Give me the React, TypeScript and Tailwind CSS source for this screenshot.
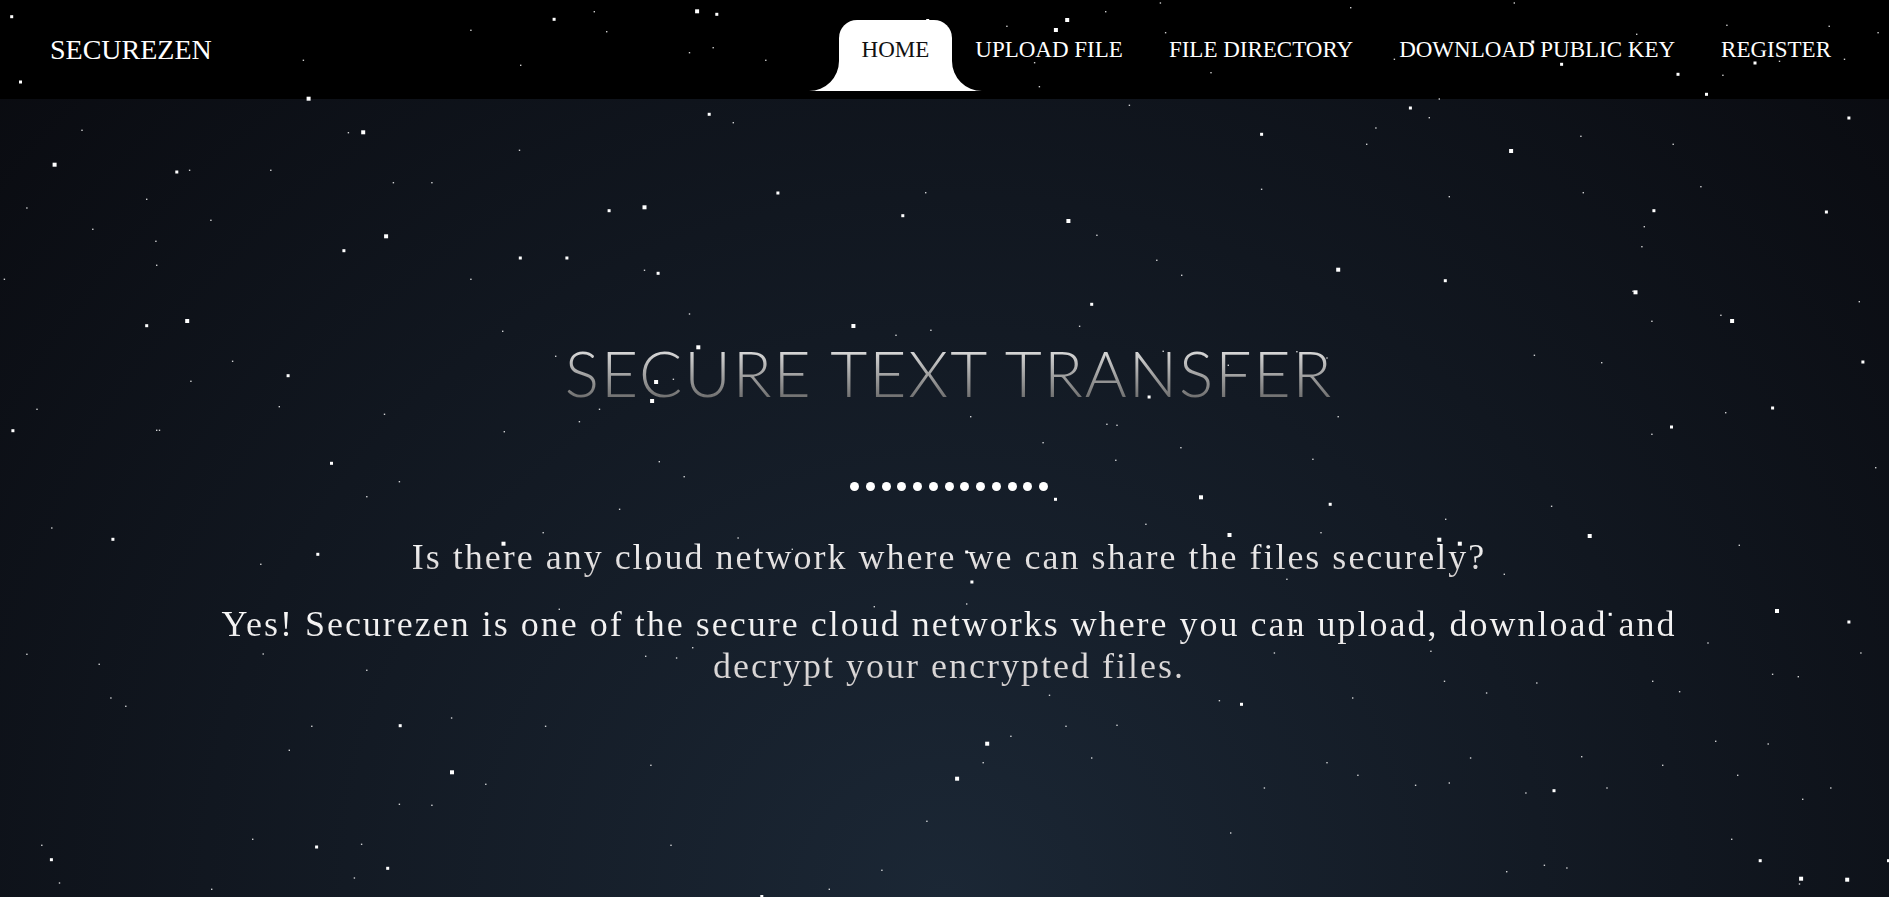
type Point = [number, number];

const smallStars: Point[] = [
  [303.4, 60.3], [470.9, 30.3], [594.3, 11.7], [606.7, 31.7], [520.7, 65.3], [82, 130.3], [189.6, 170.3],
  [270.8, 170.3], [348.4, 132.7], [519.5, 150.3], [393.4, 182.7], [431.9, 182.7], [146.7, 199.3], [26.9, 208],
  [210.9, 220.3], [92.8, 229.3], [155.9, 241.3], [156.7, 265.3], [4.4, 279.3], [470.9, 279.3],
  [689.5, 52.7], [713.2, 47.7], [765.8, 60.3], [1006.9, 26.3], [1105.7, 11.7], [1160.4, 3], [1165.6, 32.7],
  [1173.2, 49], [1211, 72.7], [1034.6, 62.7], [1039.4, 86.7], [1129.4, 105.3], [733.3, 122.7], [925.7, 192.7],
  [1096.9, 235.3], [1156.8, 260.3], [1181.7, 275.3], [644.5, 270.3],
  [1350.7, 7.7], [1514.3, 3], [1726.9, 25.3], [1636.7, 34.3], [1829.2, 26.3], [1878.1, 32.7], [1394.4, 59.3],
  [1722.9, 75.3], [1779.5, 61.3], [1844.5, 59.3], [1439.3, 99], [1429.3, 117.7], [1375.9, 128], [1366.7, 144.3],
  [1580.9, 136.3], [1673.2, 144.3], [1261.6, 189.3], [1449.3, 196.7], [1583.3, 192.7], [1700.9, 186.7],
  [1644.3, 226.7], [1641.9, 246.7], [1633, 291.3],
  [232.6, 361.3], [190.9, 381.3], [37, 409.3], [156.7, 430.3], [159.5, 430.3], [279.3, 406.7], [384.5, 414.3],
  [502.7, 331.3], [555.7, 356.3], [599.5, 409.3], [579.4, 421.7], [504.3, 431.7], [399.4, 481.7], [366.8, 496.7],
  [51.8, 528], [260.8, 564.3], [543.2, 532.7], [619.6, 509.3],
  [689.5, 314], [930.9, 330.3], [896, 335.3], [1079.6, 326.3], [673.4, 379.3], [1163.2, 351.3], [1228.3, 365.3],
  [970.7, 416.7], [1106.9, 424.3], [1117, 425.3], [1043.1, 442.7], [1180.9, 447.7], [1115.8, 460.3],
  [659.3, 461.7], [684.2, 476.7], [1145.9, 524.3], [738.1, 538], [792.3, 549.3],
  [1651.9, 321.3], [1720.9, 315.3], [1859.3, 301.7], [1534.4, 355.3], [1601.7, 362.7], [1296.9, 351.7],
  [1327, 358], [1338.2, 416.7], [1725.7, 412.7], [1651.9, 434.3], [1875.7, 467.7], [1312.9, 459.3],
  [1551.6, 506.3], [1445.7, 519.3], [1739.3, 545.3], [1321, 532.7], [1504.3, 574.3], [1286.9, 579.3],
  [559.3, 609.3], [26.9, 654.3], [263.2, 654], [99.2, 664.3], [366.8, 670.3], [110.9, 698], [125.8, 706.3],
  [451.6, 718], [311.8, 726.3], [545.6, 726.3], [289.3, 750.3], [485.8, 784.3], [399.4, 804.3], [431.9, 805.3],
  [252.7, 839.3], [361.6, 844.3], [41.8, 845.3], [59.5, 883], [354.4, 878], [211.7, 889.3],
  [874.3, 606.7], [966.7, 604], [692.7, 647.7], [645.7, 656.3], [676.6, 658], [1049.5, 695.3], [1219.4, 700.7],
  [1066, 726.3], [1117, 725.3], [1010.9, 736.3], [1091.7, 758], [983.2, 762.7], [650.9, 765.3], [926.9, 821.3],
  [671, 845.3], [1230.7, 833], [881.9, 870.3], [829.3, 889.3],
  [1708, 643], [1860.9, 653], [1274.4, 653], [1430.9, 651.3], [1772.6, 674.3], [1798.3, 676.7], [1444.5, 681.3],
  [1536.8, 683], [1652.7, 681.3], [1679.6, 691.7], [1486.6, 693], [1352.7, 698], [1715.7, 741.3], [1768.2, 744],
  [1581.7, 756.7], [1470.6, 758], [1662.7, 765.3], [1327, 762.7], [1357.9, 775.3], [1737.7, 775.3],
  [1415.6, 785.3], [1449.3, 783], [1264.4, 788], [1525.9, 793], [1607, 788], [1830.8, 788], [1802.7, 799.3],
  [1731.7, 839.3], [1799.5, 884], [1544.4, 865.3], [1566.9, 868], [1506.7, 871.7],
];

const mediumStars: Point[] = [
  [11.7, 16.7], [20.5, 82], [554.1, 19.3], [176.8, 172], [343.9, 250.7], [520.3, 258], [566.9, 258],
  [609.1, 210.7], [716.8, 14.3], [927.7, 20.5], [709.2, 114.3], [777.9, 193], [902.8, 215.7], [658.1, 273.3],
  [1532.8, 42], [1561.6, 64.3], [1678, 74.3], [1755, 63], [1706.5, 94.3], [1410.4, 108], [1261.6, 134.3],
  [1848.9, 118], [1653.9, 210.7], [1826.4, 212], [1445.3, 280.7],
  [146.7, 325.7], [288.1, 375.7], [12.9, 430.7], [331.5, 463.3], [112.9, 539.3], [317.8, 554.3],
  [1091.7, 304.3], [1149.1, 397], [1055.5, 499.3], [966.7, 552], [648.1, 568.3], [971.9, 582],
  [1862.9, 362], [1772.6, 408], [1671.5, 427], [1330.2, 504.3],
  [400.2, 725.7], [316.6, 847], [51.4, 859.7], [387.7, 868.3], [1241.5, 704.3], [761.8, 896.5],
  [1295.3, 631.3], [1610.2, 614.3], [1848.9, 622], [1554, 790.7], [1760.2, 860.7], [1888.5, 860.7],
];

const largeStars: Point[] = [
  [308.6, 98.7], [54.6, 164.7], [363.2, 132.3], [386.1, 236.3], [697.1, 11.3], [1067.2, 20], [1055.9, 30],
  [644.5, 207.3], [1068.4, 221], [1511.1, 151], [1338.2, 269.7], [1635.5, 292.3], [187.2, 321], [503.5, 543.7],
  [853.4, 326], [698.3, 347.3], [656.1, 382], [652.1, 401], [1201, 497.3], [1229.5, 535], [1732.1, 321],
  [1439.3, 539.7], [1459.8, 543.7], [1589.7, 536], [452, 772.3], [987.2, 743.7], [957.1, 778.7], [1777, 611],
  [1801.1, 878.7], [1847.2, 879.7],
];

const layers = [
  { stars: smallStars, size: 1.4, opacity: 0.8 },
  { stars: mediumStars, size: 3, opacity: 1 },
  { stars: largeStars, size: 4, opacity: 1 },
];

function StarField() {
  return (
    <svg className="pointer-events-none absolute inset-0 h-full w-full" aria-hidden="true">
      {layers.map((layer) => (
        <g key={layer.size} fill="#fff" opacity={layer.opacity}>
          {layer.stars.map(([x, y]) => (
            <rect
              key={`${x}-${y}`}
              x={x - layer.size / 2}
              y={y - layer.size / 2}
              width={layer.size}
              height={layer.size}
            />
          ))}
        </g>
      ))}
    </svg>
  );
}

function TabFlares() {
  return (
    <>
      <svg className="absolute right-full bottom-0 h-[30px] w-[30px]" viewBox="0 0 30 30" aria-hidden="true">
        <path d="M30 0A30 30 0 0 1 0 30H30Z" fill="#fff" />
      </svg>
      <svg className="absolute bottom-0 left-full h-[30px] w-[30px]" viewBox="0 0 30 30" aria-hidden="true">
        <path d="M0 0A30 30 0 0 0 30 30H0Z" fill="#fff" />
      </svg>
    </>
  );
}

function DotDivider() {
  return (
    <div className="mt-[71px] flex w-[198px] justify-between">
      {Array.from({ length: 13 }, (_, i) => (
        <span key={i} className="size-[9px] rounded-full bg-white" />
      ))}
    </div>
  );
}

const links = ["HOME", "UPLOAD FILE", "FILE DIRECTORY", "DOWNLOAD PUBLIC KEY", "REGISTER"];

export default function App() {
  return (
    <div className="relative flex min-h-screen flex-col overflow-hidden bg-[radial-gradient(ellipse_at_bottom,#1b2735_0%,#090a0f_100%)] font-['Liberation_Serif',serif] text-white">
      <header className="flex items-start justify-between bg-black pt-5 pr-[35px] pb-2 pl-[50px]">
        <a href="#home" className="pt-[14px] text-[28px] leading-8">
          SECUREZEN
        </a>
        <nav>
          <ul className="flex text-[23px] leading-[30px]">
            {links.map((label, i) => (
              <li key={label}>
                <a
                  href={`#${label.toLowerCase().replaceAll(" ", "-")}`}
                  aria-current={i === 0 ? "page" : undefined}
                  className={
                    i === 0
                      ? "relative block rounded-t-[18px] bg-white px-[23px] pt-[15px] pb-[26px] text-[#111]"
                      : "block px-[23px] pt-[15px] pb-[26px]"
                  }
                >
                  {label}
                  {i === 0 && <TabFlares />}
                </a>
              </li>
            ))}
          </ul>
        </nav>
      </header>

      <main className="flex flex-col items-center pt-[236px] pr-[10%] pl-[calc(10%+9px)] text-center">
        <h1 className="bg-linear-to-b from-white to-[#555] bg-clip-text font-['Lato',sans-serif] text-[64px] leading-[76px] font-light tracking-[2px] text-transparent">
          SECURE TEXT TRANSFER
        </h1>
        <DotDivider />
        <div className="mt-[45px] flex flex-col gap-[25px] text-[36px] leading-[42px] tracking-[2px]">
          <p className="bg-linear-to-b from-white to-[#d0cccc] bg-clip-text text-transparent">
            Is there any cloud network where we can share the files securely?
          </p>
          <p className="bg-linear-to-b from-white to-[#d0cccc] bg-clip-text text-transparent">
            Yes! Securezen is one of the secure cloud networks where you can upload, download and decrypt your
            encrypted files.
          </p>
        </div>
      </main>

      <StarField />
    </div>
  );
}
